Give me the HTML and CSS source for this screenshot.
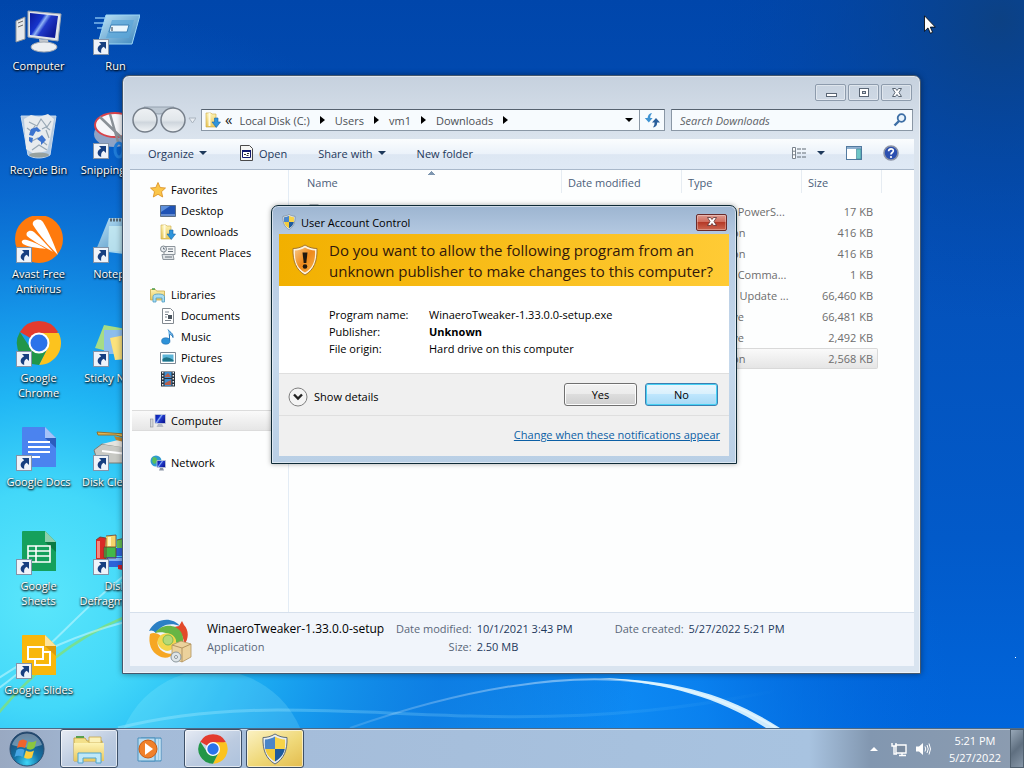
FILE: index.html
```html
<!DOCTYPE html>
<html lang="en">
<head>
    <meta charset="UTF-8">
    <meta name="viewport" content="width=device-width, initial-scale=1.0">
    <title>Downloads</title>
    <link rel="stylesheet" href="styles.css">
</head>
<body>
    <!-- shared gradients and icons -->
    <svg class="defs" width="0" height="0" aria-hidden="true">
        <defs>
            <linearGradient id="gScreen" x1="0" y1="0" x2="1" y2=".6">
                <stop offset="0" stop-color="#0a1a9c"/><stop offset=".4" stop-color="#1634cc"/><stop offset=".5" stop-color="#8fb2f6"/><stop offset=".62" stop-color="#2038c8"/><stop offset="1" stop-color="#0d1a98"/>
            </linearGradient>
            <linearGradient id="gGlass" x1="0" y1="0" x2="1" y2="1">
                <stop offset="0" stop-color="#bfe4f7"/><stop offset="1" stop-color="#3c86bd"/>
            </linearGradient>
            <linearGradient id="gFolder" x1="0" y1="0" x2="0" y2="1">
                <stop offset="0" stop-color="#fdf3b4"/><stop offset="1" stop-color="#e9c75c"/>
            </linearGradient>
            <linearGradient id="gShieldO" x1="0" y1="0" x2="1" y2="1">
                <stop offset="0" stop-color="#f9c884"/><stop offset=".5" stop-color="#ee8a1c"/><stop offset="1" stop-color="#f8b24a"/>
            </linearGradient>
            <radialGradient id="gOrb" cx=".5" cy=".9" r=".9">
                <stop offset="0" stop-color="#3fd6f8"/><stop offset=".4" stop-color="#1475a8"/><stop offset="1" stop-color="#1d3f66"/>
            </radialGradient>
            <linearGradient id="gNav" x1="0" y1="0" x2="0" y2="1">
                <stop offset="0" stop-color="#eef1f4"/><stop offset=".5" stop-color="#e2e7eb"/><stop offset=".6" stop-color="#cfd6dd"/><stop offset="1" stop-color="#f2f5f7"/>
            </linearGradient>
        </defs>
        <symbol id="arrow" viewBox="0 0 16 16">
            <rect x=".5" y=".5" width="15" height="15" fill="#eef3fa" stroke="#8393a8"/>
            <path d="M6 3h7v7l-2.300-2.300c-2.200 1.200-2.900 3-2.500 6.300C3.300 12 3.700 7.500 8.200 5.200z" fill="#173f80"/>
        </symbol>
        <symbol id="chrome" viewBox="0 0 48 48">
            <path d="M24 24 4.900 13A22 22 0 0 1 43.100 13z" fill="#e33b2e"/>
            <path d="M24 14h19.600A22 22 0 0 1 24 46l8.700-17z" fill="#fcc31e"/>
            <path d="M15.300 29 4.900 13A22 22 0 0 0 24 46l8.700-17z" fill="#229648"/>
            <circle cx="24" cy="24" r="10.500" fill="#fff"/>
            <circle cx="24" cy="24" r="8.500" fill="#2a73ea"/>
        </symbol>
        <symbol id="shield" viewBox="0 0 32 32">
            <path d="M16 1c4 2.500 8 3.500 12 3.500C28.500 17 25 26 16 31 7 26 3.500 17 4 4.500 8 4.500 12 3.500 16 1z" fill="#e9eef2" stroke="#5f6c78"/>
            <path d="M16 3.500V16H6.200C5.800 13 5.800 10 6 6.500 10 6.300 13 5.300 16 3.500z" fill="#4a86c8"/>
            <path d="M16 3.500V16h9.800c.4-3 .4-6 .2-9.500-4-.2-7-1.200-10-3z" fill="#f7d348"/>
            <path d="M6.200 16H16v12.500C10 25 7.300 21 6.200 16z" fill="#f2cb3c"/>
            <path d="M25.800 16H16v12.500C22 25 24.700 21 25.800 16z" fill="#1f5a9c"/>
        </symbol>
        <symbol id="download" viewBox="0 0 16 16">
            <path d="M1 1h5l1 1h4v13H1z" fill="url(#gFolder)" stroke="#cfa93f" stroke-width=".6"/>
            <path d="M3.500 1h2v13h-2z" fill="#fffbe0"/>
            <path d="M9.500 6h3.500v4h2.500l-4.200 5.500L7 10h2.500z" fill="#2f95dc" stroke="#1766a8" stroke-width=".6"/>
        </symbol>
        <symbol id="screen" viewBox="0 0 16 16">
            <rect x=".5" y="6" width="2.500" height="8" fill="#d5d8dc" stroke="#8b9096" stroke-width=".6"/>
            <path d="M5 1.500h10.500v9H5z" fill="url(#gScreen)" stroke="#c9cfd8" stroke-width=".8"/>
            <path d="M8 11h4l1.500 3h-7z" fill="#b6bcc5"/>
        </symbol>
    </svg>

    <div class="desktop">
        <svg class="wallpaper" viewBox="0 0 1024 768" preserveAspectRatio="none" aria-hidden="true">
            <defs>
                <linearGradient id="wBase" x1="0" y1="0" x2="0" y2="1">
                    <stop offset="0" stop-color="#0046ab"/><stop offset=".3" stop-color="#0450b8"/><stop offset=".7" stop-color="#025ac9"/><stop offset="1" stop-color="#0068e0"/>
                </linearGradient>
                <radialGradient id="wCyan" gradientUnits="userSpaceOnUse" cx="40" cy="600" r="600">
                    <stop offset="0" stop-color="#5ae6fb"/><stop offset=".18" stop-color="#43d8f9"/><stop offset=".34" stop-color="#20b6f4"/><stop offset=".48" stop-color="#169aec" stop-opacity=".92"/><stop offset=".68" stop-color="#0c74da" stop-opacity=".7"/><stop offset="1" stop-color="#0658c4" stop-opacity="0"/>
                </radialGradient>
                <radialGradient id="wBlue" gradientUnits="userSpaceOnUse" cx="460" cy="760" r="500">
                    <stop offset="0" stop-color="#16a0ff"/><stop offset=".5" stop-color="#0c88f4" stop-opacity=".8"/><stop offset="1" stop-color="#0068e0" stop-opacity="0"/>
                </radialGradient>
                <radialGradient id="wDark" gradientUnits="userSpaceOnUse" cx="1000" cy="20" r="300">
                    <stop offset="0" stop-color="#0c4184"/><stop offset="1" stop-color="#0046ab" stop-opacity="0"/>
                </radialGradient>
                <linearGradient id="wLine" x1="0" y1="0" x2="1" y2="0">
                    <stop offset="0" stop-color="#fff" stop-opacity=".2"/><stop offset="1" stop-color="#fff"/>
                </linearGradient>
                <linearGradient id="wFade" x1="0" y1="0" x2="1" y2="0">
                    <stop offset="0" stop-color="#a8ecff"/><stop offset="1" stop-color="#a8ecff" stop-opacity="0"/>
                </linearGradient>
            </defs>
            <rect width="1024" height="768" fill="url(#wBase)"/>
            <rect width="1024" height="768" fill="url(#wDark)"/>
            <rect width="1024" height="768" fill="url(#wBlue)"/>
            <rect width="1024" height="768" fill="url(#wCyan)"/>
            <circle cx="212" cy="766" r="96" fill="#bff" opacity=".16"/>
            <path d="M118 728C230 700 330 712 470 716S700 706 780 690" fill="none" stroke="url(#wFade)" stroke-width="3" opacity=".4"/>
            <path d="M350 728C470 686 560 676 620 680s110 20 156 48" fill="none" stroke="url(#wLine)" stroke-width="2" opacity=".7"/>
            <path d="M600 678c80 2 130 18 180 50h-14C720 698 670 684 600 678z" fill="#e6f8ff" opacity=".9"/>
            <path d="M-4 716C30 675 70 640 125 617" fill="none" stroke="#7fe07a" stroke-width="2.500" opacity=".8"/>
            <path d="M-4 680C40 650 80 634 125 622M-4 690 C40 660 80 610 125 575" fill="none" stroke="#d6fbff" stroke-width="2" opacity=".5"/>
            <rect x="1015" y="657" width="1" height="1" fill="#fff"/>
        </svg>

        <ul class="icons">
            <li>
                <svg viewBox="0 0 48 48"><path d="M1 13l9-4v22l-9 3z" fill="#e6e8ea" stroke="#8d949c"/><path d="M3 15l5-2M3 19l5-2" stroke="#666"/><path d="M13 3l33 3-3 27-30-4z" fill="#e2e6eb" stroke="#9fa7b2"/><path d="M15 5l28 3-3 22-25-3z" fill="url(#gScreen)"/><path d="M24 31l9 1 1 6h-9z" fill="#c4c9cf"/><ellipse cx="29" cy="39" rx="13" ry="5" fill="#eceff2" stroke="#a2a9b2"/></svg>
                <span>Computer</span>
            </li>
            <li>
                <svg viewBox="0 0 48 48"><path d="M3 10h10M2 15h11M5 20h7" stroke="#5f9ddd" stroke-width="2"/><path d="M14 7h34l-8 29H6z" fill="url(#gGlass)" stroke="#9fd8f5"/><path d="M20 12h22l-5 18H14z" fill="#5aa5d8" opacity=".7"/><path d="M19 17h18l-2 7H17z" fill="#eaf6fd" stroke="#3a7fb5"/><path d="M20 19v4" stroke="#234"/><use href="#arrow" x="1" y="31" width="16" height="16"/></svg>
                <span>Run</span>
            </li>
            <li>
                <svg viewBox="0 0 48 48"><path d="M6 4h35l-6 39c-6 4-17 4-22 0z" fill="#c7d6e4" opacity=".9" stroke="#dde8f2"/><path d="M9 7l7-4 8 2 9-3 6 5-4 20-3 12-13 3-8-5z" fill="#e7ebee"/><path d="M14 10l8 4 4-7 6 8 4-6M15 30l8-4 9 7M20 14l-5 7M31 18l3 8M17 38l7-5 8 5M12 16l4 3M27 17l4-2 4 3" fill="none" stroke="#98a8b5" stroke-width="1.200"/><path d="M16 17l6-2 4 4-3 1-2-1-3 5-4-1zM14 25l4 1-1 5-3-2zM22 27l5-4 4 5-5 5v-3z" fill="#3b73cf"/><ellipse cx="24" cy="43" rx="10" ry="2.500" fill="#98a29f"/></svg>
                <span>Recycle Bin</span>
            </li>
            <li>
                <svg viewBox="0 0 48 48"><ellipse cx="22" cy="22" rx="20" ry="13" fill="#8fa3c5"/><ellipse cx="23" cy="13" rx="20" ry="12" fill="#f5f6fa" stroke="#d8434b" stroke-width="2"/><path d="M8 5l28 27M18 2l8 28" stroke="#8a9097" stroke-width="2.500"/><ellipse cx="27" cy="38" rx="4" ry="7" fill="none" stroke="#1f7bd6" stroke-width="3"/><use href="#arrow" x="1" y="31" width="16" height="16"/></svg>
                <span>Snipping Tool</span>
            </li>
            <li>
                <svg viewBox="0 0 48 48"><circle cx="24" cy="23" r="24" fill="#ff7a0c"/><path d="M43 39C35 31 24 19 18 9c-2-5 7-8 10-3 6 10 10 20 15 33z" fill="#fff"/><path d="M38 36C30 31 19 26 12 20c-2-4 3-7 7-4 7 6 13 13 19 20zM31 33C23 32 13 31 8 28c-3-3 0-5 4-4 7 2 13 5 19 9z" fill="#fff"/><use href="#arrow" x="1" y="31" width="16" height="16"/></svg>
                <span>Avast Free Antivirus</span>
            </li>
            <li>
                <svg viewBox="0 0 48 48"><path d="M17 2h31v34l-44-2z" fill="url(#gGlass)"/><path d="M17 10h31v30l-32-4z" fill="#c9ecf2" opacity=".8"/><path d="M18 4h30" stroke="#546673" stroke-width="3" stroke-dasharray="2 1"/><use href="#arrow" x="1" y="31" width="16" height="16"/></svg>
                <span>Notepad</span>
            </li>
            <li>
                <svg viewBox="0 0 48 48"><use href="#chrome" y="-1" width="48" height="48"/><use href="#arrow" x="1" y="31" width="16" height="16"/></svg>
                <span>Google Chrome</span>
            </li>
            <li>
                <svg viewBox="0 0 48 48"><path d="M12 5l28 5-5 26-32-8z" fill="#a6dc86"/><path d="M12 10h28v24H12z" fill="#8cbdee"/><path d="M18 18l30-6v26l-25 2z" fill="#fbe27c"/><use href="#arrow" x="1" y="31" width="16" height="16"/></svg>
                <span>Sticky Notes</span>
            </li>
            <li>
                <svg viewBox="0 0 48 48"><path d="M8 3h22l11 11v29H8q-1 0-1-1V4q0-1 1-1z" fill="#4b83ef"/><path d="M30 3l11 11H30z" fill="#a5c2f8"/><path d="M30 14h11v10z" fill="#2b5cbd"/><path d="M13 18h22M13 23h22M13 28h22M13 33h12" stroke="#fff" stroke-width="2"/><use href="#arrow" x="1" y="31" width="16" height="16"/></svg>
                <span>Google Docs</span>
            </li>
            <li>
                <svg viewBox="0 0 48 48"><path d="M2 26l8-6 38 5v14H6z" fill="#c8c9c4" stroke="#7e7c74"/><path d="M10 20l20-5 18 2v9z" fill="#e5e4df"/><path d="M5 8l43 3v7l-24-7H6z" fill="#e0b350" stroke="#96712b"/><path d="M22 12l26 6v4l-24-6z" fill="#b98632"/><path d="M10 27l34 4" stroke="#fff" stroke-width="2"/><use href="#arrow" x="1" y="31" width="16" height="16"/></svg>
                <span>Disk Cleanup</span>
            </li>
            <li>
                <svg viewBox="0 0 48 48"><path d="M8 3h22l11 11v29H8q-1 0-1-1V4q0-1 1-1z" fill="#15a05c"/><path d="M30 3l11 11H30z" fill="#8cd0ac"/><path d="M30 14h11v10z" fill="#0b7a43"/><path d="M13 18h22v16H13zM13 23h22M13 28h22M21 18v16" fill="none" stroke="#fff" stroke-width="1.600"/><use href="#arrow" x="1" y="31" width="16" height="16"/></svg>
                <span>Google<br>Sheets</span>
            </li>
            <li>
                <svg viewBox="0 0 48 48"><path d="M4 12l4-3 6 1v21H4z" fill="#d92a26"/><path d="M5 13h3v17H5z" fill="#f58a80"/><path d="M14 8l10-1v12H13z" fill="#f5d46a"/><path d="M16 9h3v9h-3z" fill="#fff3b8"/><path d="M12 19h12v11H12z" fill="#42b84a"/><path d="M25 12l8-2v16h-8z" fill="#64c152"/><path d="M24 20h9v8h-9zM15 29h18v10H15z" fill="#2c62d8"/><path d="M16 30h14v3H16z" fill="#7fb0f5"/><path d="M31 25h14v20L26 41v-4h5z" fill="#c71f2b"/><path d="M4 12l4-3 6 1v21M14 8l10-1v12H12v11h12V20M25 12l8-2v28" fill="none" stroke="#6d3a2a" stroke-width=".8"/><use href="#arrow" x="1" y="31" width="16" height="16"/></svg>
                <span>Disk Defragmenter</span>
            </li>
            <li>
                <svg viewBox="0 0 48 48"><path d="M8 3h22l11 11v29H8q-1 0-1-1V4q0-1 1-1z" fill="#f8b70c"/><path d="M30 3l11 11H30z" fill="#fde39a"/><path d="M30 14h11v10z" fill="#dd9a08"/><path d="M13 15h15v12H13zM28 20h7v13H20v-6" fill="none" stroke="#fff" stroke-width="2"/><use href="#arrow" x="1" y="31" width="16" height="16"/></svg>
                <span>Google Slides</span>
            </li>
        </ul>

        <!-- Explorer window -->
        <section class="window" aria-label="Downloads">
            <div class="caption">
                <button type="button" aria-label="Minimize"><svg width="12" height="12" viewBox="0 0 12 12"><rect x="1.500" y="6.500" width="10" height="3" fill="#fff" stroke="#5a6675"/></svg></button>
                <button type="button" aria-label="Maximize"><svg width="12" height="12" viewBox="0 0 12 12"><rect x="1.500" y="1.500" width="9" height="8" fill="#fff" stroke="#5a6675"/><rect x="4.500" y="4.500" width="3" height="2" fill="#cdd6e0" stroke="#5a6675"/></svg></button>
                <button type="button" aria-label="Close"><svg width="12" height="12" viewBox="0 0 12 12"><path d="M1.500 1.500h3L6 3.500l1.500-2h3L8 5.500l2.500 4h-3L6 7.500l-1.500 2h-3L4 5.500z" fill="#fff" stroke="#5a6675"/></svg></button>
            </div>
            <div class="navbar">
                <svg class="nav-buttons" width="66" height="28" viewBox="0 0 66 28" aria-hidden="true">
                    <path d="M14 1h30v4q-15 6-30 0z" fill="#bcc7d2" stroke="#96a3b0"/>
                    <circle cx="15" cy="14" r="12" fill="url(#gNav)" stroke="#767f8a" stroke-width="1.500"/>
                    <circle cx="43" cy="14" r="12" fill="url(#gNav)" stroke="#767f8a" stroke-width="1.500"/>
                    <path d="M59 12h7l-3.500 5z" fill="#e8edf2" stroke="#aab4bf"/>
                </svg>
                <div class="address">
                    <svg width="16" height="16"><use href="#download"/></svg>
                    <span class="chev">«</span>
                    <button type="button">Local Disk (C:)</button><i class="tri-right"></i>
                    <button type="button">Users</button><i class="tri-right"></i>
                    <button type="button">vm1</button><i class="tri-right"></i>
                    <button type="button">Downloads</button><i class="tri-right"></i>
                    <i class="tri-down push"></i>
                    <button type="button" class="refresh" aria-label="Refresh"><svg width="16" height="16" viewBox="0 0 16 16"><path d="M8 1Q4 1.500 3.600 6H.8l4 4.500L8.600 6H6.200Q6.200 3.500 8 1z" fill="#3f93d2"/><path d="M9 15.500q4-.5 4.200-5H16l-4-4.500-4 4.500h2.600Q10.800 13 9 15.500z" fill="#2a5f9c"/></svg></button>
                </div>
                <div class="search">
                    <input type="text" placeholder="Search Downloads" aria-label="Search Downloads">
                    <svg width="14" height="14" viewBox="0 0 14 14"><circle cx="8.500" cy="5" r="3.800" fill="#e8f3fc" stroke="#3d6ea5" stroke-width="1.800"/><path d="M6 8l-4.500 4.500" stroke="#3d6ea5" stroke-width="2.400"/></svg>
                </div>
            </div>

            <div class="pane">
                <div class="toolbar">
                    <button type="button">Organize <i class="tri-down"></i></button>
                    <button type="button"><svg width="16" height="16" viewBox="0 0 16 16"><path d="M2.500.5h9l3 3v12h-12z" fill="#f6f6f4" stroke="#4a4a4a"/><path d="M4.500 5.500h8v7h-8z" fill="#fff" stroke="#10186e"/><path d="M4 6h9" stroke="#10186e" stroke-width="2"/><path d="M6 9.500h2M9 8.500h2M8.500 10.500h2" stroke="#333" fill="none"/></svg> Open</button>
                    <button type="button">Share with <i class="tri-down"></i></button>
                    <button type="button">New folder</button>
                    <span class="tools">
                        <button type="button" aria-label="Change your view"><svg width="16" height="14" viewBox="0 0 16 14"><path d="M1.500 1.500h3v11h-3zM1.500 5.200h3M1.500 8.800h3" fill="#fff" stroke="#79828c"/><path d="M6 3h4M11 3h4M6 7h4M11 7h4M6 11h4M11 11h4" stroke="#616a75" stroke-width="1.200"/></svg><i class="tri-down"></i></button>
                        <button type="button" aria-label="Preview pane"><svg width="16" height="14" viewBox="0 0 16 14"><rect x=".5" y=".5" width="15" height="13" fill="#fff" stroke="#527aa0"/><path d="M1 2h14" stroke="#8fb0cf" stroke-width="2"/><path d="M10.500 3h4.500v10h-4.500z" fill="#6fc6c6" stroke="#3b7d96" stroke-width=".6"/></svg></button>
                        <button type="button" aria-label="Help"><svg width="16" height="16" viewBox="0 0 16 16"><circle cx="8" cy="8" r="7" fill="#2b4fb0" stroke="#8b93a6" stroke-width="1.600"/><path d="M5.600 6.200C5.600 3 10.600 3.200 10.300 6 10.200 7.500 8 7.600 8 9.600" fill="none" stroke="#fff" stroke-width="1.700"/><circle cx="8" cy="12" r="1.100" fill="#fff"/></svg></button>
                    </span>
                </div>

                <div class="content">
                    <nav class="sidebar">
                        <ul>
                            <li class="root"><svg viewBox="0 0 16 16"><path d="M8 .5l2.200 5 5.300.5-4 3.700 1.200 5.300L8 12.300 3.300 15l1.200-5.300-4-3.700 5.300-.5z" fill="#fbc64a" stroke="#d98b1c" stroke-width=".8"/></svg>Favorites</li>
                            <li><svg viewBox="0 0 16 16"><path d="M.5 2.500h15v11H.5z" fill="#1f53b5" stroke="#5c6f86"/><path d="M1 3h9L1 9z" fill="#5d90dc"/><path d="M1 12h14" stroke="#a9c3e6"/></svg>Desktop</li>
                            <li><svg viewBox="0 0 16 16"><use href="#download"/></svg>Downloads</li>
                            <li><svg viewBox="0 0 16 16"><path d="M4 1.500h11v8H4z" fill="#f2f4f5" stroke="#8d959c"/><path d="M2 9.500h11l1 5H3z" fill="#dfe3e6" stroke="#8d959c"/><circle cx="3.500" cy="4" r="3" fill="#e9edf0" stroke="#7f8890"/><path d="M8 4h5M8 6.500h5M5 12h7M3.500 2.500V4H5" stroke="#66707a" fill="none"/></svg>Recent Places</li>
                            <li class="gap root"><svg viewBox="0 0 16 16"><path d="M.5 2.500h5l1 1.500h8v9H.5z" fill="url(#gFolder)" stroke="#c9a94a" stroke-width=".8"/><path d="M2 2h3" stroke="#4a9e4a" stroke-width="1.500"/><path d="M3 15V9.500Q3 7 8.500 7T14.500 9.500V15H12v-4H6v4z" fill="#a8dcf2" stroke="#4c9cc4" stroke-width=".8"/></svg>Libraries</li>
                            <li><svg viewBox="0 0 16 16"><path d="M2.500.5h8l3 3v12h-11z" fill="#fff" stroke="#838a91"/><path d="M5 4h4M5 6.500h3M5 9h2M5 12.500h6" stroke="#7c858e"/><path d="M8 7h4v4H8z" fill="#4a545e"/></svg>Documents</li>
                            <li><svg viewBox="0 0 16 16"><path d="M8 .5c1 2.500 5.500 3 5 8-1-2.500-2-3-3.500-3V12" fill="#6fb6ea" stroke="#2677b8"/><ellipse cx="5.800" cy="12" rx="4.200" ry="3.200" fill="#2e92d8" stroke="#1f6cae" stroke-width=".6"/></svg>Music</li>
                            <li><svg viewBox="0 0 16 16"><path d="M.5 2.500h15v11H.5z" fill="#fff" stroke="#7b8894"/><path d="M2.500 4.500h11v7h-11z" fill="#5cb5d8"/><path d="M2.500 9q4-4 11 1v1.500h-11z" fill="#1e7387"/></svg>Pictures</li>
                            <li><svg viewBox="0 0 16 16"><path d="M1 .5h14v15H1z" fill="#27313c"/><path d="M4.500 1h7v6h-7zM4.500 8h7v7h-7z" fill="#3f8ed0"/><path d="M5 12l6-3v5H5zM5 5l3-3 3 4H5z" fill="#b75f4c"/><path d="M2.700 1v14M13.300 1v14" stroke="#e9eef2" stroke-width="1.400" stroke-dasharray="1.500 1.500"/></svg>Videos</li>
                            <li class="gap root selected"><svg viewBox="0 0 16 16"><use href="#screen"/></svg>Computer</li>
                            <li class="gap root"><svg viewBox="0 0 16 16"><circle cx="6" cy="6" r="5.500" fill="#2f9bd0"/><path d="M3 2q4 0 4 3T4 9Q1 7 3 2z" fill="#58bf5c"/><path d="M7 5.500h8.500v7H7z" fill="url(#gScreen)" stroke="#bcc6d4" stroke-width=".8"/><path d="M10 13h3l1 2.500H9z" fill="#8a94a5"/></svg>Network</li>
                        </ul>
                    </nav>
                    <div class="files">
                        <table>
                            <thead>
                                <tr><th class="name sorted">Name</th><th class="mid">Date modified</th><th class="mid">Type</th><th class="size">Size</th><th class="end"></th></tr>
                            </thead>
                            <tbody>
                                <tr><td><svg class="file-icon" width="16" height="16" viewBox="0 0 16 16"><path d="M2.500 1h9l3 3v11h-12z" fill="#fff" stroke="#6c7683"/></svg></td><td></td><td>Windows PowerS...</td><td>17 KB</td></tr>
                                <tr><td></td><td></td><td>Application</td><td>416 KB</td></tr>
                                <tr><td></td><td></td><td>Application</td><td>416 KB</td></tr>
                                <tr><td></td><td></td><td>Windows Comma...</td><td>1 KB</td></tr>
                                <tr><td></td><td></td><td>Microsoft Update ...</td><td>66,460 KB</td></tr>
                                <tr><td></td><td></td><td>ZIP archive</td><td>66,481 KB</td></tr>
                                <tr><td></td><td></td><td>ZIP archive</td><td>2,492 KB</td></tr>
                                <tr class="selected"><td></td><td></td><td>Application</td><td>2,568 KB</td></tr>
                            </tbody>
                        </table>
                    </div>
                </div>

                <div class="details">
                    <svg width="48" height="48" viewBox="0 0 48 48" aria-hidden="true">
                        <path d="M3 14C9 1 26-1 34 9 24 5 15 8 10 16 7 13 5 13 3 14z" fill="#2c80c5"/>
                        <path d="M36 4l2 4c5 5 5 14 0 20 0-8-3-13-10-18l5-1z" fill="#e2492a"/>
                        <path d="M9 16c6-9 20-10 26-1 4 7 2 14-4 19 1-8-2-14-8-17-5-2-10-2-14-1z" fill="#67b545"/>
                        <path d="M4 17c3-2 8-1 11 2-6 5-4 14 5 17 3 1 5 1 8 0-3 5-10 6-15 3C5 35 2 26 4 17z" fill="#f6a724"/>
                        <path d="M14 19c5-5 14-3 16 4 1 8-7 13-12 10-7-3-8-10-4-14z" fill="#f4d64c"/>
                        <circle cx="22" cy="23" r="5" fill="#b5d977" stroke="#7fba52"/>
                        <path d="M26 28l9-4 10 3v13l-9 5-10-4z" fill="#ecd29c" stroke="#b39460" stroke-width=".8"/>
                        <path d="M26 28l10 3v14M36 31l9-4" fill="none" stroke="#b39460"/>
                        <circle cx="30" cy="40" r="5" fill="#dfe5e8" stroke="#8a969c"/><circle cx="30" cy="40" r="1.500" fill="#fff" stroke="#8a969c"/>
                    </svg>
                    <div class="file-name"><strong>WinaeroTweaker-1.33.0.0-setup</strong><span>Application</span></div>
                    <dl>
                        <dt>Date modified:</dt><dd>10/1/2021 3:43 PM</dd>
                        <dt>Size:</dt><dd>2.50 MB</dd>
                    </dl>
                    <dl>
                        <dt>Date created:</dt><dd>5/27/2022 5:21 PM</dd>
                    </dl>
                </div>
            </div>
        </section>

        <!-- UAC prompt -->
        <section class="dialog" role="dialog" aria-labelledby="uacTitle">
            <div class="dialog-title">
                <svg width="16" height="16"><use href="#shield"/></svg>
                <span id="uacTitle">User Account Control</span>
                <button type="button" class="close" aria-label="Close"><svg width="12" height="12" viewBox="0 0 12 12"><path d="M1.500 1.500h3L6 3.500l1.500-2h3L8 5.500l2.500 4h-3L6 7.500l-1.500 2h-3L4 5.500z" fill="#fff" stroke="#5b3030" stroke-width=".8"/></svg></button>
            </div>
            <div class="dialog-body">
                <div class="banner">
                    <svg width="32" height="32" viewBox="0 0 32 32" aria-hidden="true">
                        <path d="M16 1c4 2.500 8 3.500 12 3.500C28.500 17 25 26 16 31 7 26 3.500 17 4 4.500 8 4.500 12 3.500 16 1z" fill="#fdf3df" stroke="#a5762a"/>
                        <path d="M16 3.500c3 1.800 6 2.800 10 3C26.500 17 24 24 16 28.500 8 24 5.500 17 6 6.500c4-.2 7-1.200 10-3z" fill="url(#gShieldO)"/>
                        <path d="M13.500 8.500h5L17.300 19h-2.600z" fill="#20180e"/><circle cx="16" cy="22.500" r="2.300" fill="#20180e"/>
                    </svg>
                    <h1>Do you want to allow the following program from an unknown publisher to make changes to this computer?</h1>
                </div>
                <dl class="info">
                    <dt>Program name:</dt><dd>WinaeroTweaker-1.33.0.0-setup.exe</dd>
                    <dt>Publisher:</dt><dd class="strong">Unknown</dd>
                    <dt>File origin:</dt><dd>Hard drive on this computer</dd>
                </dl>
                <div class="actions">
                    <button type="button" class="expand"><svg width="20" height="20" viewBox="0 0 20 20"><circle cx="10" cy="10" r="9" fill="#f4f4f4" stroke="#808080"/><path d="M6 7.500l4 4 4-4" fill="none" stroke="#222" stroke-width="2.400"/></svg>Show details</button>
                    <button type="button" class="btn">Yes</button>
                    <button type="button" class="btn primary">No</button>
                </div>
                <div class="footer"><a href="#">Change when these notifications appear</a></div>
            </div>
        </section>

        <svg class="cursor" width="12" height="19" viewBox="0 0 12 19" aria-hidden="true"><path d="M.5.8v15.500l3.500-3.400 2.400 5.400 2.200-1-2.300-5.200h5z" fill="#fff" stroke="#000" stroke-width=".8"/></svg>

        <footer class="taskbar">
            <button type="button" class="start" aria-label="Start">
                <svg width="36" height="36" viewBox="0 0 36 36"><circle cx="18" cy="18" r="17" fill="url(#gOrb)" stroke="#2b4d70"/><path d="M3 14a15.500 15.500 0 0 1 30 0q-15 5-30 0z" fill="#fff" opacity=".35"/><path d="M10 10q4-3 8 0l-2 7q-4-2-8 0z" fill="#f0642c"/><path d="M19.500 10.500q4 2 8-1l-2 7.500q-4 3-8 .5z" fill="#8bc63f"/><path d="M7.500 19q4-2.500 8 0l-2 7q-4-2.500-8 0z" fill="#46a5e4"/><path d="M17 19.500q4 2.500 8 0l-2 7q-4 2.500-8 0z" fill="#fbce3c"/></svg>
            </button>
            <button type="button" class="task open" aria-label="Windows Explorer">
                <svg width="36" height="32" viewBox="0 0 36 32"><path d="M3 5h11l2 3h15v20H3z" fill="#f3e08a" stroke="#c6a647"/><path d="M5 4h8M19 7h9" stroke="#5aa04c" stroke-width="2"/><path d="M18 4h12v6H18z" fill="#fbf1b8" stroke="#c6a647" stroke-width=".8"/><path d="M3 10h30v18H3z" fill="url(#gFolder)"/><path d="M7 30v-10h23v10h-5v-5H12v5z" fill="#bfe8f8" stroke="#4ea5cf"/></svg>
            </button>
            <button type="button" class="task" aria-label="Windows Media Player">
                <svg width="36" height="32" viewBox="0 0 36 32"><path d="M8 5h20v23H8z" fill="#9ccde8" stroke="#4a90bd"/><path d="M5 5h17v23H5z" fill="#b8dcf0" stroke="#4a90bd"/><path d="M24 6v21M27 6v21" stroke="#e6f4fb"/><circle cx="15" cy="16" r="9" fill="#f0812a" stroke="#c95c12"/><path d="M12 10l8 6-8 6z" fill="#fff"/></svg>
            </button>
            <button type="button" class="task open" aria-label="Google Chrome">
                <svg width="32" height="32"><use href="#chrome"/></svg>
            </button>
            <button type="button" class="task alert" aria-label="User Account Control">
                <svg width="32" height="32"><use href="#shield"/></svg>
            </button>
            <div class="tray">
                <svg class="more" width="10" height="6" viewBox="0 0 10 6"><path d="M1 5l4-4 4 4z" fill="#fff"/></svg>
                <svg width="16" height="16" viewBox="0 0 16 16"><path d="M5 4h10v8H5z" fill="#7a8b9f" stroke="#fff" stroke-width="1.400"/><path d="M8 14.500h7M11 12v2M1 2v3h4V2M3 5v8h3" fill="none" stroke="#fff" stroke-width="1.400"/></svg>
                <svg width="16" height="16" viewBox="0 0 16 16"><path d="M1 5.500h3L8 2v12l-4-3.500H1z" fill="#fff"/><path d="M10 5.500q1.500 2.500 0 5M12 4q2.500 4 0 8M14 2.500q3 5.500 0 11" fill="none" stroke="#fff"/></svg>
                <div class="clock"><span>5:21 PM</span><span>5/27/2022</span></div>
                <button type="button" class="show-desktop" aria-label="Show desktop"></button>
            </div>
        </footer>
    </div>
</body>
</html>
```

FILE: styles.css
```css
* {
    box-sizing: border-box;
}
body {
    margin: 0;
    font-family: 'Open Sans', 'Noto Sans', sans-serif;
    font-size: 11px;
    color: #000;
}
ul, dl, dd, h1 {
    margin: 0;
    padding: 0;
    list-style: none;
}
svg {
    display: block;
    flex: none;
}
button {
    font: inherit;
    color: inherit;
    padding: 0;
    border: none;
    background: none;
}
.defs {
    position: absolute;
}
.desktop {
    position: relative;
    height: 100vh;
    min-height: 600px;
    display: flex;
    flex-direction: column;
    overflow: hidden;
    background: #0450b8;
}
.wallpaper {
    position: absolute;
    width: 100%;
    height: 100%;
}

/* desktop icons */
.icons {
    position: relative;
    flex: 1;
    display: grid;
    grid-template-columns: 77px 77px;
    grid-auto-rows: 104px;
    line-height: 15px;
}
.icons li {
    display: flex;
    flex-direction: column;
    align-items: center;
    gap: 2px;
    padding-top: 8px;
    text-align: center;
    color: #fff;
    text-shadow: 0 1px 2px #000, 1px 1px 2px rgba(0, 0, 0, 0.7);
}
.icons svg {
    width: 48px;
    height: 48px;
}

/* small arrows */
.tri-right, .tri-down {
    display: inline-block;
    flex: none;
    border: 4px solid transparent;
}
.tri-right {
    border-left-color: #000;
    border-left-width: 5px;
    border-right: none;
}
.tri-down {
    border-top-color: currentColor;
    border-bottom: none;
}

/* explorer window */
.window {
    position: absolute;
    top: 75px;
    right: 103px;
    bottom: 94px;
    left: 122px;
    display: flex;
    flex-direction: column;
    padding: 0 6px 7px 7px;
    border: 1px solid #45586d;
    border-radius: 7px 7px 0 0;
    background: linear-gradient(#c6d1de, #dbe4ee 64px, #d9e4f0);
    box-shadow: inset 0 0 0 1px rgba(255, 255, 255, 0.5), 0 0 6px rgba(0, 0, 0, 0.4);
}
.caption {
    display: flex;
    justify-content: flex-end;
    gap: 2px;
    padding: 8px 2px 7px;
}
.caption button {
    width: 31px;
    height: 17px;
    display: grid;
    place-items: center;
    border: 1px solid #8d9bac;
    border-radius: 2px;
    box-shadow: inset 0 0 0 1px rgba(255, 255, 255, 0.4);
}
.navbar {
    display: flex;
    align-items: center;
    height: 24px;
    padding-right: 1px;
    margin-bottom: 7px;
    color: #4b4f54;
}
.nav-buttons {
    margin-right: 5px;
}
.address {
    flex: 1;
    display: flex;
    align-items: center;
    gap: 10px;
    height: 22px;
    padding-left: 3px;
    border: 1px solid #8a97a5;
    border-top-color: #55616e;
    background: #f7fbfe;
}
.address .chev {
    margin: 0 -3px 2px -6px;
    font-size: 15px;
    color: #222;
}
.address .tri-down {
    color: #000;
}
.address .push {
    margin-left: auto;
    margin-right: -4px;
}
.address .refresh {
    display: grid;
    place-items: center;
    width: 25px;
    height: 20px;
    border-left: 1px solid #8a97a5;
}
.search {
    flex: 0 1 242px;
    display: flex;
    align-items: center;
    height: 22px;
    margin-left: 6px;
    padding-right: 5px;
    border: 1px solid #8a97a5;
    border-top-color: #55616e;
    background: #f7fbfe;
}
.search input {
    flex: 1;
    min-width: 0;
    padding: 0 8px;
    border: none;
    outline: none;
    background: none;
    font: italic 11px 'Open Sans', sans-serif;
}
.search input::placeholder {
    color: #5c6166;
    opacity: 1;
}
.pane {
    flex: 1;
    min-height: 0;
    display: flex;
    flex-direction: column;
    background: #fdfefe;
}
.toolbar {
    display: flex;
    align-items: center;
    gap: 31px;
    height: 31px;
    padding: 0 15px 2px 18px;
    border-bottom: 1px solid #a9b8ca;
    background: linear-gradient(#fbfdfe, #ebf2fa 50%, #dde7f3 52%, #dfe9f5);
    color: #1e395b;
}
.toolbar button {
    display: flex;
    align-items: center;
    gap: 5px;
}
.tools {
    display: flex;
    align-items: center;
    gap: 21px;
    margin-left: auto;
}
.tools button {
    gap: 10px;
}
.content {
    flex: 1;
    min-height: 0;
    display: flex;
}
.sidebar {
    flex: 0 0 159px;
    padding-top: 9px;
    border-right: 1px solid #e3ecf5;
}
.sidebar li {
    display: flex;
    align-items: center;
    gap: 5px;
    height: 21px;
    margin-left: 2px;
    padding-left: 28px;
}
.sidebar .root {
    padding-left: 18px;
}
.sidebar .gap {
    margin-top: 21px;
}
.sidebar svg {
    width: 16px;
    height: 16px;
}
.sidebar .selected {
    border: 1px solid #dcdcdc;
    border-width: 1px 0;
    background: linear-gradient(#fafafa, #e6e6e6);
}
.files {
    flex: 1;
    padding-left: 6px;
    overflow: hidden;
}
table {
    width: 587px;
    table-layout: fixed;
    border-collapse: separate;
    border-spacing: 0;
    color: #6d6d6d;
}
th {
    height: 23px;
    padding: 2px 6px 0;
    border-right: 1px solid #e6ecf2;
    font-weight: normal;
    text-align: left;
    color: #4c607a;
}
thead::after {
    content: '';
    display: block;
    height: 8px;
}
th.name {
    width: 267px;
    padding-left: 12px;
}
th.sorted {
    background: conic-gradient(from 135deg at 50% 0, #7f97b0 90deg, transparent 0) 132px 1px / 8px 4px no-repeat;
}
th.mid {
    width: 120px;
}
th.size {
    width: 76px;
    border-right: none;
}
th.end {
    width: 4px;
    padding: 0;
}
td {
    height: 21px;
    padding: 0 6px;
    white-space: nowrap;
}
td:last-child {
    padding: 0 4px 0 0;
    border-right: 1px solid transparent;
    text-align: right;
}
.file-icon {
    margin-left: 6px;
}
tr.selected td {
    border: 1px solid #d9d9d9;
    border-width: 1px 0;
    background: linear-gradient(#fafafa, #e5e5e5);
}
tr.selected td:last-child {
    border-right-width: 1px;
    border-radius: 0 2px 2px 0;
}
.details {
    display: flex;
    gap: 6px;
    height: 54px;
    padding: 4px 16px;
    border-top: 1px solid #d6e0ec;
    background: #f1f5fb;
    line-height: 18px;
    color: #5a6779;
}
.file-name {
    display: flex;
    flex-direction: column;
    min-width: 183px;
    margin: 3px 0 0 7px;
}
.file-name strong {
    font-size: 12px;
    font-weight: normal;
    color: #000;
}
.details dl {
    display: grid;
    grid-template-columns: auto auto;
    align-content: start;
    column-gap: 5px;
    margin-top: 3px;
}
.details dl + dl {
    margin-left: 36px;
}
.details dt {
    text-align: right;
}
.details dd {
    color: #1e395b;
}

/* UAC dialog */
.dialog {
    position: absolute;
    top: 205px;
    left: 271px;
    width: 466px;
    padding: 0 7px 7px;
    border: 1px solid #0e2a36;
    border-radius: 7px 7px 0 0;
    background: linear-gradient(#9db5d1, #b5cae2 30px, #c6d9ec 60%, #b9cfe5);
    box-shadow: inset 0 0 0 1px rgba(255, 255, 255, 0.5), 0 0 5px rgba(0, 0, 0, 0.35);
}
.dialog-title {
    display: flex;
    align-items: center;
    gap: 4px;
    height: 28px;
    padding: 4px 2px 0;
}
.dialog-title .close {
    display: grid;
    place-items: center;
    width: 31px;
    height: 17px;
    margin-left: auto;
    border: 1px solid #6a2b2b;
    border-radius: 2px;
    background: linear-gradient(#dd9a90, #cf6a5a 48%, #b53a28 50%, #cc6650);
    box-shadow: inset 0 0 0 1px rgba(255, 255, 255, 0.3);
}
.dialog-body {
    background: #fff;
}
.banner {
    display: flex;
    gap: 8px;
    height: 52px;
    padding: 6px 10px;
    background: linear-gradient(to right, #f2b000, #ffcb35);
}
.banner svg {
    margin-top: 4px;
}
.banner h1 {
    font-size: 15px;
    font-weight: normal;
    line-height: 21px;
    color: #32180a;
}
.info {
    display: grid;
    grid-template-columns: 100px 1fr;
    height: 87px;
    padding: 20px 0 0 50px;
    line-height: 17px;
    align-content: start;
}
.info .strong {
    font-weight: bold;
}
.actions {
    display: flex;
    align-items: center;
    gap: 8px;
    height: 42px;
    padding: 0 11px 0 9px;
    border-top: 1px solid #dfdfdf;
    background: #f0f0f0;
}
.expand {
    display: flex;
    align-items: center;
    gap: 6px;
    margin-right: auto;
    padding-top: 4px;
}
.btn {
    width: 73px;
    height: 23px;
    border: 1px solid #707070;
    border-radius: 3px;
    background: linear-gradient(#f2f2f2, #ebebeb 49%, #dddddd 50%, #cfcfcf);
    box-shadow: inset 0 0 0 1px #fcfcfc;
}
.btn.primary {
    border-color: #3c7fb1;
    background: linear-gradient(#eaf6fd, #d9f0fc 49%, #bee6fd 50%, #a7d9f5);
    box-shadow: inset 0 0 0 1px #48d1f4;
}
.footer {
    height: 41px;
    padding: 11px 9px;
    border-top: 1px solid #dfdfdf;
    background: #f0f0f0;
    text-align: right;
}
.footer a {
    color: #0c5fa5;
}

.cursor {
    position: absolute;
    top: 15px;
    left: 924px;
}

/* taskbar */
.taskbar {
    position: relative;
    flex: none;
    display: flex;
    gap: 4px;
    height: 40px;
    border-top: 1px solid #4d6a86;
    background: linear-gradient(to right, #99a9c2, #a4bbd8 12%, #a8c3e0 79%, #8297b0 85%, #8c9cb0);
    box-shadow: inset 0 1px 0 rgba(255, 255, 255, 0.45);
}
.start {
    width: 56px;
    padding: 1px 0 0 9px;
}
.task {
    display: grid;
    place-items: center;
    width: 58px;
    border: 1px solid transparent;
    border-radius: 3px;
}
.task.open, .task.alert {
    border-color: #3d5068;
    box-shadow: inset 0 0 0 1px rgba(255, 255, 255, 0.6);
}
.task.open {
    background: linear-gradient(150deg, #e6ebf4, #bccbe0 55%, #adc2dd);
}
.task.alert {
    background: linear-gradient(150deg, #fbf2c4, #efd878 55%, #e3bc4e);
}
.tray {
    display: flex;
    align-items: center;
    gap: 8px;
    margin-left: auto;
    color: #fff;
}
.tray .more {
    margin-right: 4px;
}
.clock {
    display: flex;
    flex-direction: column;
    align-items: center;
    margin: 0 1px 0 10px;
    line-height: 17px;
}
.show-desktop {
    width: 14px;
    height: 39px;
    border: 1px solid #50606f;
    background: linear-gradient(135deg, #98a8b8, #5f6f80 50%, #8797a8);
}
```
